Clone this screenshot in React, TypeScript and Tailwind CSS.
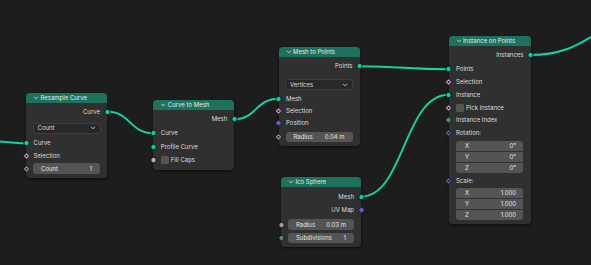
import React from "react";

const GEO = "#00d6a3";
const BOOL = "#cca6d6";
const VEC = "#6363c7";
const FLOAT = "#a1a1a1";
const INT = "#598c5c";

type Kind = "circle" | "diamond" | "ddot";

function Sock({ side, color, kind = "circle" }: { side: "l" | "r"; color: string; kind?: Kind }) {
  const pos = side === "l" ? "left-[-3.5px]" : "right-[-3.5px]";
  return (
    <svg width="7" height="7" viewBox="0 0 7 7" className={`absolute top-1/2 -translate-y-1/2 ${pos}`}>
      {kind === "circle" ? (
        <circle cx="3.5" cy="3.5" r="2.6" fill={color} stroke="#111" strokeWidth="0.8" />
      ) : (
        <polygon points="3.5,0.3 6.7,3.5 3.5,6.7 0.3,3.5" fill={color} stroke="#111" strokeWidth="0.8" />
      )}
      {kind === "ddot" && <circle cx="3.5" cy="3.5" r="1.1" fill="#1a1a1a" />}
    </svg>
  );
}

function Chevron() {
  return (
    <svg width="6" height="6" viewBox="0 0 6 6" className="shrink-0">
      <path d="M1.3 2.1 L3 3.8 L4.7 2.1" fill="none" stroke="#e6e6e6" strokeWidth="0.8" strokeLinecap="round" strokeLinejoin="round" />
    </svg>
  );
}

function Header({ title }: { title: string }) {
  return (
    <div className="flex items-center h-[10px] rounded-t-[4px] bg-[#1d725e] pl-[7px] gap-[1.5px] text-[#e8e8e8]">
      <Chevron />
      <span>{title}</span>
    </div>
  );
}

function OutRow({ label, color, kind, cls }: { label: string; color: string; kind?: Kind; cls: string }) {
  return (
    <div className={`relative flex items-center justify-end pr-[7px] ${cls}`}>
      <span>{label}</span>
      <Sock side="r" color={color} kind={kind} />
    </div>
  );
}

function InRow({ label, color, kind, cls }: { label: string; color: string; kind?: Kind; cls: string }) {
  return (
    <div className={`relative flex items-center pl-[7.5px] ${cls}`}>
      <span>{label}</span>
      <Sock side="l" color={color} kind={kind} />
    </div>
  );
}

function CheckRow({ label, color, kind, cls }: { label: string; color: string; kind?: Kind; cls: string }) {
  return (
    <div className={`relative flex items-center pl-[7.5px] gap-[2px] ${cls}`}>
      <div className="w-[8px] h-[8px] rounded-[1.5px] bg-[#545454]" />
      <span>{label}</span>
      <Sock side="l" color={color} kind={kind} />
    </div>
  );
}

function Dropdown({ label, cls }: { label: string; cls: string }) {
  return (
    <div className={`mx-[6.5px] flex items-center justify-between px-[4px] rounded-[3px] bg-[#282828] border border-[#3e3e3e] ${cls}`}>
      <span>{label}</span>
      <Chevron />
    </div>
  );
}

function FieldRow({ label, value, color, kind, cls }: { label: string; value: string; color: string; kind?: Kind; cls: string }) {
  return (
    <div className={`relative px-[7px] ${cls}`}>
      <div className="h-full flex items-center justify-between px-[8px] rounded-[3px] bg-[#545454] text-[#e4e4e4]">
        <span>{label}</span>
        <span>{value}</span>
      </div>
      <Sock side="l" color={color} kind={kind} />
    </div>
  );
}

function VecGroup({ values, cls }: { values: string[]; cls: string }) {
  const labels = ["X", "Y", "Z"];
  return (
    <div className={`mx-[7.5px] flex flex-col gap-[1px] rounded-[3px] overflow-hidden ${cls}`}>
      {values.map((v, i) => (
        <div key={i} className="h-[10.2px] flex items-center justify-between pl-[9px] pr-[7px] bg-[#545454] text-[#e4e4e4]">
          <span>{labels[i]}</span>
          <span>{v}</span>
        </div>
      ))}
    </div>
  );
}

export default function App() {
  return (
    <div className="relative w-[591px] h-[265px] overflow-hidden bg-[#1d1d1d] [font-family:Inter,sans-serif] text-[6px] leading-none text-[#dcdcdc]">
      <svg className="absolute inset-0" width="591" height="265" viewBox="0 0 591 265">
        <g fill="none" stroke="#14d2a2" strokeWidth="2" strokeLinecap="round">
          <path d="M -30 139.5 C -5 139.5 5 143.35 26 143.35" />
          <path d="M 107 111.5 C 130 111.5 130 133.35 153.3 133.35" />
          <path d="M 234.3 119.3 C 256 119.3 256 98.65 278.5 98.65" />
          <path d="M 359.5 66.3 C 404 66.3 404 69.3 448.5 69.3" />
          <path d="M 361 196.65 C 404 196.65 404 94.8 448.5 94.8" />
          <path d="M 530.5 55 C 590 55 590 20 650 20" />
        </g>
      </svg>

      {/* Resample Curve */}
      <div className="absolute left-[26px] top-[92.5px] w-[81px] rounded-[4px] bg-[#303030] shadow-[0_1px_3px_rgba(0,0,0,0.6)] flex flex-col">
        <Header title="Resample Curve" />
        <OutRow label="Curve" color={GEO} cls="mt-[3px] h-[12px]" />
        <Dropdown label="Count" cls="mt-[5px] h-[11.5px]" />
        <InRow label="Curve" color={GEO} cls="mt-[3px] h-[12.7px]" />
        <InRow label="Selection" color={BOOL} kind="ddot" cls="h-[12.7px]" />
        <FieldRow label="Count" value="1" color={FLOAT} kind="ddot" cls="mt-[1px] h-[11px]" />
        <div className="h-[3.7px]" />
      </div>

      {/* Curve to Mesh */}
      <div className="absolute left-[153.3px] top-[100px] w-[81px] rounded-[4px] bg-[#303030] shadow-[0_1px_3px_rgba(0,0,0,0.6)] flex flex-col">
        <Header title="Curve to Mesh" />
        <OutRow label="Mesh" color={GEO} cls="mt-[3.3px] h-[12px]" />
        <InRow label="Curve" color={GEO} cls="mt-[1.4px] h-[13.3px]" />
        <InRow label="Profile Curve" color={GEO} cls="h-[13.3px]" />
        <CheckRow label="Fill Caps" color={BOOL} cls="h-[13.3px]" />
        <div className="h-[3.4px]" />
      </div>

      {/* Mesh to Points */}
      <div className="absolute left-[278.5px] top-[46.7px] w-[81px] rounded-[4px] bg-[#303030] shadow-[0_1px_3px_rgba(0,0,0,0.6)] flex flex-col">
        <Header title="Mesh to Points" />
        <OutRow label="Points" color={GEO} cls="mt-[3.6px] h-[12px]" />
        <Dropdown label="Vertices" cls="mt-[7px] h-[10.5px]" />
        <InRow label="Mesh" color={GEO} cls="mt-[2.7px] h-[12.3px]" />
        <InRow label="Selection" color={BOOL} kind="ddot" cls="h-[12.3px]" />
        <InRow label="Position" color={VEC} kind="diamond" cls="h-[12.3px]" />
        <FieldRow label="Radius" value="0.04 m" color={FLOAT} kind="ddot" cls="mt-[2.2px] h-[10.5px]" />
        <div className="h-[3.5px]" />
      </div>

      {/* Ico Sphere */}
      <div className="absolute left-[281px] top-[177.3px] w-[80px] rounded-[4px] bg-[#303030] shadow-[0_1px_3px_rgba(0,0,0,0.6)] flex flex-col">
        <Header title="Ico Sphere" />
        <OutRow label="Mesh" color={GEO} cls="mt-[2.7px] h-[13.3px]" />
        <OutRow label="UV Map" color={VEC} kind="diamond" cls="h-[13.3px]" />
        <FieldRow label="Radius" value="0.03 m" color={FLOAT} cls="mt-[2.7px] h-[10.5px]" />
        <FieldRow label="Subdivisions" value="1" color={INT} cls="mt-[2.9px] h-[10.5px]" />
        <div className="h-[3.5px]" />
      </div>

      {/* Instance on Points */}
      <div className="absolute left-[448.5px] top-[36px] w-[82px] rounded-[4px] bg-[#303030] shadow-[0_1px_3px_rgba(0,0,0,0.6)] flex flex-col">
        <Header title="Instance on Points" />
        <OutRow label="Instances" color={GEO} cls="mt-[3px] h-[12px]" />
        <InRow label="Points" color={GEO} cls="mt-[1.9px] h-[12.75px]" />
        <InRow label="Selection" color={BOOL} kind="ddot" cls="h-[12.75px]" />
        <InRow label="Instance" color={GEO} cls="h-[12.75px]" />
        <CheckRow label="Pick Instance" color={BOOL} kind="ddot" cls="h-[12.75px]" />
        <InRow label="Instance Index" color={INT} kind="diamond" cls="h-[12.75px]" />
        <InRow label="Rotation:" color={VEC} kind="ddot" cls="h-[12.75px]" />
        <VecGroup values={["0°", "0°", "0°"]} cls="mt-[1.3px]" />
        <InRow label="Scale:" color={VEC} kind="ddot" cls="mt-[1.5px] h-[12.75px]" />
        <VecGroup values={["1.000", "1.000", "1.000"]} cls="mt-[0.35px]" />
        <div className="h-[4px]" />
      </div>
    </div>
  );
}
